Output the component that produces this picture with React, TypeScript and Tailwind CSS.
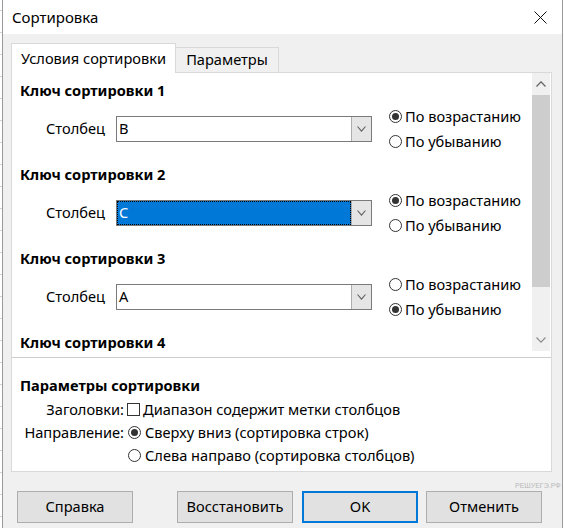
import React from "react";

function Radio({ checked }: { checked?: boolean }) {
  return (
    <span className="w-[13px] h-[13px] rounded-full border border-[#333333] bg-white flex items-center justify-center shrink-0">
      {checked && <span className="w-[7px] h-[7px] rounded-full bg-[#333333]" />}
    </span>
  );
}

function Chevron({ up, color = "#5a5a5a", w = 9 }: { up?: boolean; color?: string; w?: number }) {
  const h = Math.round(w / 2) + 1;
  return (
    <svg width={w} height={h} viewBox={`0 0 ${w} ${h}`} className="block">
      {up ? (
        <polyline points={`0.5,${h - 0.5} ${w / 2},0.8 ${w - 0.5},${h - 0.5}`} fill="none" stroke={color} strokeWidth="1.2" />
      ) : (
        <polyline points={`0.5,0.5 ${w / 2},${h - 0.8} ${w - 0.5},0.5`} fill="none" stroke={color} strokeWidth="1.1" />
      )}
    </svg>
  );
}

function Combo({ value, selected }: { value: string; selected?: boolean }) {
  return (
    <div className="w-[256px] h-[26px] border border-[#7a7a7a] bg-white flex shrink-0">
      <div
        className={
          selected
            ? "flex-1 flex items-center pl-[1px] bg-[#0078d7] text-white border border-dotted border-black"
            : "flex-1 flex items-center pl-[2px]"
        }
      >
        {value}
      </div>
      <div className="w-[20px] border-l border-[#adadad] bg-[#e5e5e5] flex items-center justify-center">
        <Chevron w={9} color="#606060" />
      </div>
    </div>
  );
}

function SortKey({ n, value, asc, selected }: { n: number; value: string; asc: boolean; selected?: boolean }) {
  return (
    <div className="flex flex-col mb-[10px] shrink-0">
      <div className="h-[20px] leading-[20px] font-bold">Ключ сортировки {n}</div>
      <div className="mt-[4px] h-[50px] flex items-center">
        <div className="w-[70px] pl-[26px] box-content">Столбец</div>
        <Combo value={value} selected={selected} />
        <div className="ml-[17px] flex flex-col">
          <div className="h-[25px] flex items-center gap-[3px]">
            <Radio checked={asc} />
            <span>По возрастанию</span>
          </div>
          <div className="h-[25px] flex items-center gap-[3px]">
            <Radio checked={!asc} />
            <span>По убыванию</span>
          </div>
        </div>
      </div>
    </div>
  );
}

function Btn({ label, primary, className = "" }: { label: string; primary?: boolean; className?: string }) {
  return (
    <div
      className={
        "w-[116px] h-[32px] flex items-center justify-center bg-[#e1e1e1] " +
        (primary ? "border-2 border-[#0078d7] " : "border border-[#adadad] ") +
        className
      }
    >
      {label}
    </div>
  );
}

export default function App() {
  const gridRows = [10, 32, 54, 76, 98, 120, 142, 164, 186, 208, 230, 252, 274, 296, 318, 340, 362, 384, 406, 428, 450, 472, 494, 516];
  return (
    <div className="w-[564px] h-[528px] flex overflow-hidden bg-white text-[14.6px] text-black font-['Noto_Sans',sans-serif] relative">
      {/* spreadsheet visible behind the dialog */}
      <div className="w-[2px] h-full bg-white relative shrink-0">
        {gridRows.map((y) => (
          <div key={y} className="absolute left-0 w-[2px] h-px bg-[#d4d4d4]" style={{ top: y }} />
        ))}
      </div>

      <div className="w-[561px] h-full border-x border-[#9a9a9a] flex flex-col shrink-0">
        {/* title bar */}
        <div className="h-[34px] bg-white flex items-center justify-between pl-[9px] pr-[15px] shrink-0">
          <span className="text-[15px]">Сортировка</span>
          <svg width="13" height="13" viewBox="0 0 13 13" className="block">
            <line x1="0.5" y1="0.5" x2="12.5" y2="12.5" stroke="#111" strokeWidth="1" />
            <line x1="12.5" y1="0.5" x2="0.5" y2="12.5" stroke="#111" strokeWidth="1" />
          </svg>
        </div>

        {/* body */}
        <div className="flex-1 bg-[#f0f0f0] pl-[8px] pt-[9px] flex flex-col">
          {/* tabs */}
          <div className="h-[29px] flex items-end shrink-0 relative z-10">
            <div className="w-[165px] h-[30px] -mb-px bg-white border border-b-0 border-[#d9d9d9] flex items-center justify-center">
              Условия сортировки
            </div>
            <div className="w-[103px] h-[25px] bg-[#f0f0f0] border border-l-0 border-b-0 border-[#d9d9d9] flex items-center justify-center">
              Параметры
            </div>
          </div>

          {/* tab page */}
          <div className="w-[541px] h-[400px] bg-white border border-[#d9d9d9] flex flex-col shrink-0">
            <div className="h-[285px] border-b border-[#cccccc] flex shrink-0">
              <div className="flex-1 overflow-hidden pl-[8px] pt-[7px] flex flex-col">
                <SortKey n={1} value="B" asc />
                <SortKey n={2} value="C" asc selected />
                <SortKey n={3} value="A" asc={false} />
                <div className="h-[20px] leading-[20px] font-bold shrink-0">Ключ сортировки 4</div>
              </div>
              {/* vertical scrollbar */}
              <div className="w-[18px] mr-[1px] h-[278px] bg-[#f0f0f0] flex flex-col shrink-0">
                <div className="h-[22px] flex items-center justify-center">
                  <Chevron up w={10} color="#606060" />
                </div>
                <div className="h-[192px] bg-[#cdcdcd]" />
                <div className="flex-1" />
                <div className="h-[22px] flex items-center justify-center">
                  <Chevron w={10} color="#8a8a8a" />
                </div>
              </div>
            </div>

            <div className="flex-1 pl-[8px] pt-[17px] flex flex-col">
              <div className="h-[20px] leading-[20px] font-bold">Параметры сортировки</div>
              <div className="mt-[3px] h-[23px] flex items-center">
                <div className="w-[104px] text-right">Заголовки:</div>
                <span className="ml-[3px] w-[13px] h-[13px] border border-[#333333] bg-white shrink-0" />
                <span className="ml-[3px]">Диапазон содержит метки столбцов</span>
              </div>
              <div className="h-[23px] flex items-center">
                <div className="w-[104px] text-right">Направление:</div>
                <span className="ml-[4px]">
                  <Radio checked />
                </span>
                <span className="ml-[4px]">Сверху вниз (сортировка строк)</span>
              </div>
              <div className="h-[23px] flex items-center">
                <div className="w-[104px]" />
                <span className="ml-[4px]">
                  <Radio />
                </span>
                <span className="ml-[4px]">Слева направо (сортировка столбцов)</span>
              </div>
            </div>
          </div>

          {/* buttons */}
          <div className="mt-[19px] pl-[6px] flex shrink-0">
            <Btn label="Справка" />
            <Btn label="Восстановить" className="ml-[44px]" />
            <Btn label="OK" primary className="ml-[9px]" />
            <Btn label="Отменить" className="ml-[8px]" />
          </div>
        </div>
      </div>

      <div className="w-px h-full bg-white shrink-0" />

      <div className="absolute left-[515px] top-[481px] text-[7px] leading-[10px] text-[#b8b8b8] font-['Liberation_Sans',sans-serif]">
        РЕШУЕГЭ.РФ
      </div>
    </div>
  );
}
